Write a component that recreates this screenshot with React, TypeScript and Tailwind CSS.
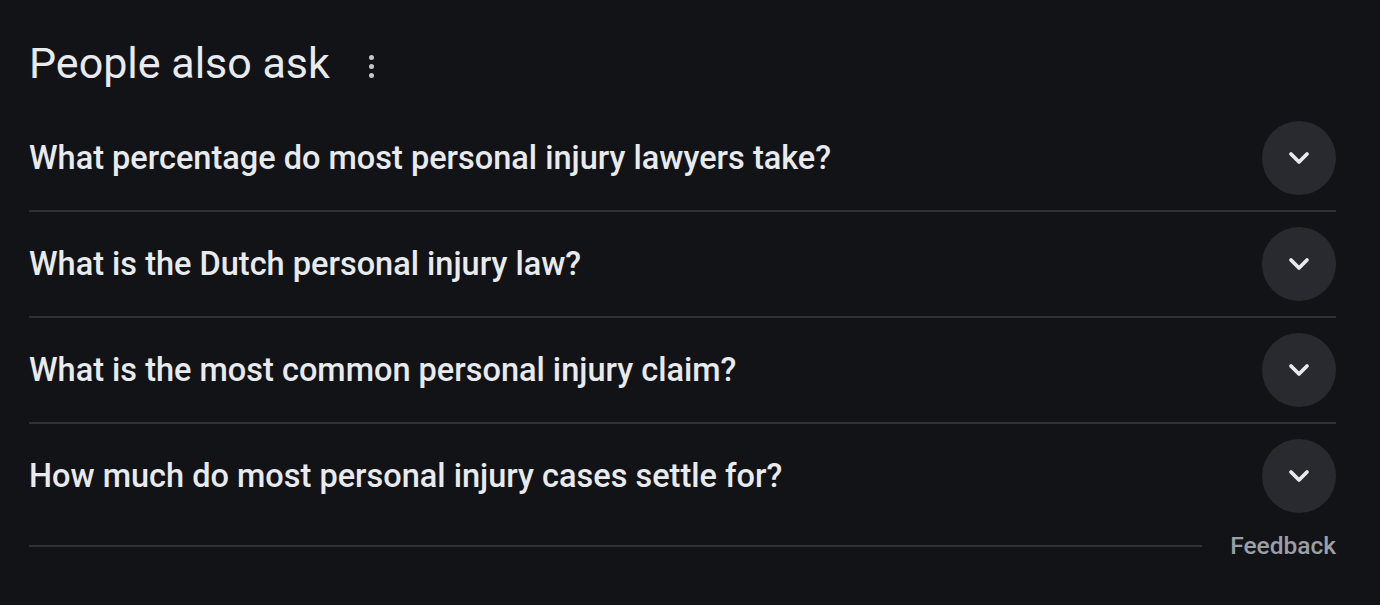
import { ChevronDown } from "lucide-react";

const questions = [
  "What percentage do most personal injury lawyers take?",
  "What is the Dutch personal injury law?",
  "What is the most common personal injury claim?",
  "How much do most personal injury cases settle for?",
];

function Row({ q, last }: { q: string; last?: boolean }) {
  return (
    <div className={last ? "" : "border-b-2 border-[#303236]"}>
      <div className="flex h-[104px] items-center justify-between">
        <p className="text-[32.5px] font-medium text-[#e8eaed]">{q}</p>
        <div className="flex h-[74px] w-[74px] items-center justify-center rounded-full bg-[#282a2f]">
          <ChevronDown className="h-8 w-8 text-[#e8eaed]" strokeWidth={2.8} />
        </div>
      </div>
    </div>
  );
}

export default function App() {
  return (
    <div
      className="h-[605px] w-[1380px] bg-[#121317] pl-[29px] pr-[44px] pt-[36px]"
      style={{ fontFamily: "Roboto, 'Open Sans', sans-serif" }}
    >
      <div className="flex h-[70px] items-start">
        <h2 className="text-[43px] leading-[54px] text-[#e8eaed]">People also ask</h2>
        <div className="ml-[39px] mt-[19px] flex flex-col gap-[4px]">
          <span className="h-[5px] w-[5px] rounded-full bg-[#c4c7c5]" />
          <span className="h-[5px] w-[5px] rounded-full bg-[#c4c7c5]" />
          <span className="h-[5px] w-[5px] rounded-full bg-[#c4c7c5]" />
        </div>
      </div>
      {questions.map((q, i) => (
        <Row key={q} q={q} last={i === questions.length - 1} />
      ))}
      <div className="mt-[3px] flex h-[30px] items-center gap-[28px]">
        <div className="h-[2px] flex-1 bg-[#303236]" />
        <span className="text-[24.5px] font-medium text-[#9aa0a6]">Feedback</span>
      </div>
    </div>
  );
}
